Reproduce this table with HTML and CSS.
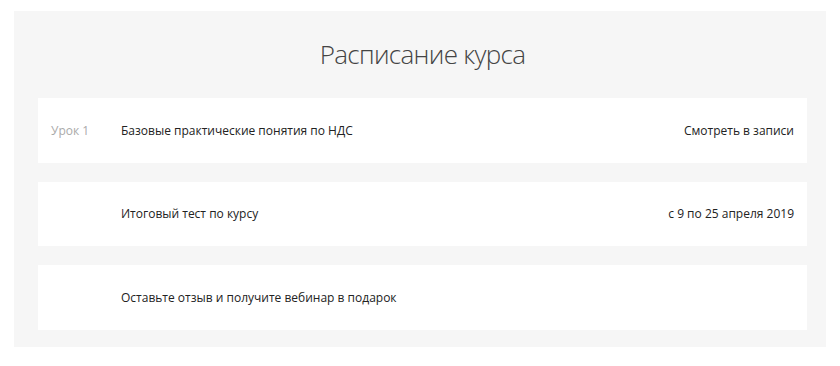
FILE: index.html
```html
<!DOCTYPE html>
<html lang="ru">
<head>
<meta charset="utf-8">
<title>Расписание курса</title>
<link rel="stylesheet" href="styles.css">
</head>
<body>
<section class="schedule">
  <h2 class="schedule__title">Расписание курса</h2>
  <ul class="schedule__list">
    <li class="lesson">
      <span class="lesson__num">Урок 1</span>
      <span class="lesson__name">Базовые практические понятия по НДС</span>
      <span class="lesson__meta">Смотреть в записи</span>
    </li>
    <li class="lesson">
      <span class="lesson__num"></span>
      <span class="lesson__name">Итоговый тест по курсу</span>
      <span class="lesson__meta">с 9 по 25 апреля 2019</span>
    </li>
    <li class="lesson">
      <span class="lesson__num"></span>
      <span class="lesson__name">Оставьте отзыв и получите вебинар в подарок</span>
      <span class="lesson__meta"></span>
    </li>
  </ul>
</section>
</body>
</html>
```
FILE: styles.css
```css
html, body {
  margin: 0;
  padding: 0;
  background: #fff;
}
body {
  font-family: "Open Sans", "Liberation Sans", sans-serif;
  color: #222;
}
.schedule {
  margin: 11px 14px 0 14px;
  background: #f6f6f6;
  padding: 24px 19px 17px 24px;
}
.schedule__title {
  margin: 0 0 25px 0;
  font-size: 26px;
  letter-spacing: -0.7px;
  line-height: 38px;
  font-weight: 300;
  color: #444;
  text-align: center;
}
.schedule__list {
  list-style: none;
  margin: 0;
  padding: 0;
  display: flex;
  flex-direction: column;
  gap: 19px;
}
.lesson {
  height: 64.5px;
  background: #fff;
  display: flex;
  align-items: center;
  padding: 1px 13px 0 13px;
  box-sizing: border-box;
  font-size: 12px;
  line-height: 18px;
}
.lesson__num {
  width: 70px;
  flex: none;
  color: #aaa;
}
.lesson__name {
  flex: 1;
}
.lesson__meta {
  flex: none;
  text-align: right;
}
```
